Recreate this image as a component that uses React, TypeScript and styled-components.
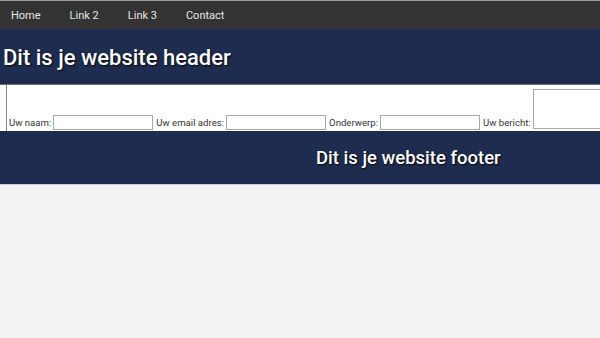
import styled, { createGlobalStyle } from "styled-components";

const GlobalStyle = createGlobalStyle`
  html, body {
    margin: 0;
    padding: 0;
    background-color: #f2f2f2;
    font-family: Roboto, "Liberation Sans", sans-serif;
    overflow-x: hidden;
  }
`;

const Nav = styled.nav`
  display: flex;
  align-items: center;
  gap: 29px;
  height: 28px;
  padding-left: 11px;
  background-color: #333333;
  border-top: 1px solid #9a9a9a;
`;

const NavLink = styled.a`
  color: #e6e6e6;
  font-size: 11px;
  text-decoration: none;
`;

const Header = styled.header`
  display: flex;
  align-items: center;
  height: 55px;
  padding-left: 3px;
  background-color: #1e2d4f;
  border-bottom: 1px solid #6d6d6d;
`;

const HeaderTitle = styled.h1`
  margin: 0;
  padding-top: 2px;
  color: #ffffff;
  font-size: 22px;
  font-weight: 500;
  text-shadow: 1px 1px 2px rgba(0, 0, 0, 0.9);
`;

const Section = styled.section`
  background-color: #ffffff;
  padding-left: 6px;
  white-space: nowrap;
`;

const Form = styled.form`
  display: flex;
  align-items: flex-end;
  height: 46px;
  padding: 0 0 1px 1px;
  box-sizing: border-box;
  border-left: 1px solid #8a8a8a;
`;

const Label = styled.label`
  color: #333333;
  font-size: 9.6px;
  line-height: 12px;
  margin: 0 2px 1px 1px;
`;

const Input = styled.input`
  width: 100px;
  height: 15px;
  box-sizing: border-box;
  margin-right: 2px;
  border: 1px solid #a8a8a8;
  padding: 0;
`;

const Message = styled.textarea`
  flex-shrink: 0;
  width: 120px;
  height: 40px;
  box-sizing: border-box;
  margin: 0 0 1px 0;
  border: 1px solid #a8a8a8;
  resize: none;
`;

const Footer = styled.footer`
  display: flex;
  align-items: center;
  height: 53px;
  padding-left: 316px;
  background-color: #1e2d4f;
  border-bottom: 1px solid #c7cbe0;
`;

const FooterTitle = styled.h2`
  margin: 0;
  padding-top: 1px;
  color: #ffffff;
  font-size: 18.5px;
  font-weight: 500;
  text-shadow: 1px 1px 2px rgba(0, 0, 0, 0.9);
`;

const links = ["Home", "Link 2", "Link 3", "Contact"];

function App() {
  return (
    <>
      <GlobalStyle />
      <Nav>
        {links.map((link) => (
          <NavLink key={link} href="#">
            {link}
          </NavLink>
        ))}
      </Nav>
      <Header>
        <HeaderTitle>Dit is je website header</HeaderTitle>
      </Header>
      <Section>
        <Form>
          <Label>Uw naam:</Label>
          <Input type="text" />
          <Label>Uw email adres:</Label>
          <Input type="text" />
          <Label>Onderwerp:</Label>
          <Input type="text" />
          <Label>Uw bericht:</Label>
          <Message />
        </Form>
      </Section>
      <Footer>
        <FooterTitle>Dit is je website footer</FooterTitle>
      </Footer>
    </>
  );
}

export default App;
